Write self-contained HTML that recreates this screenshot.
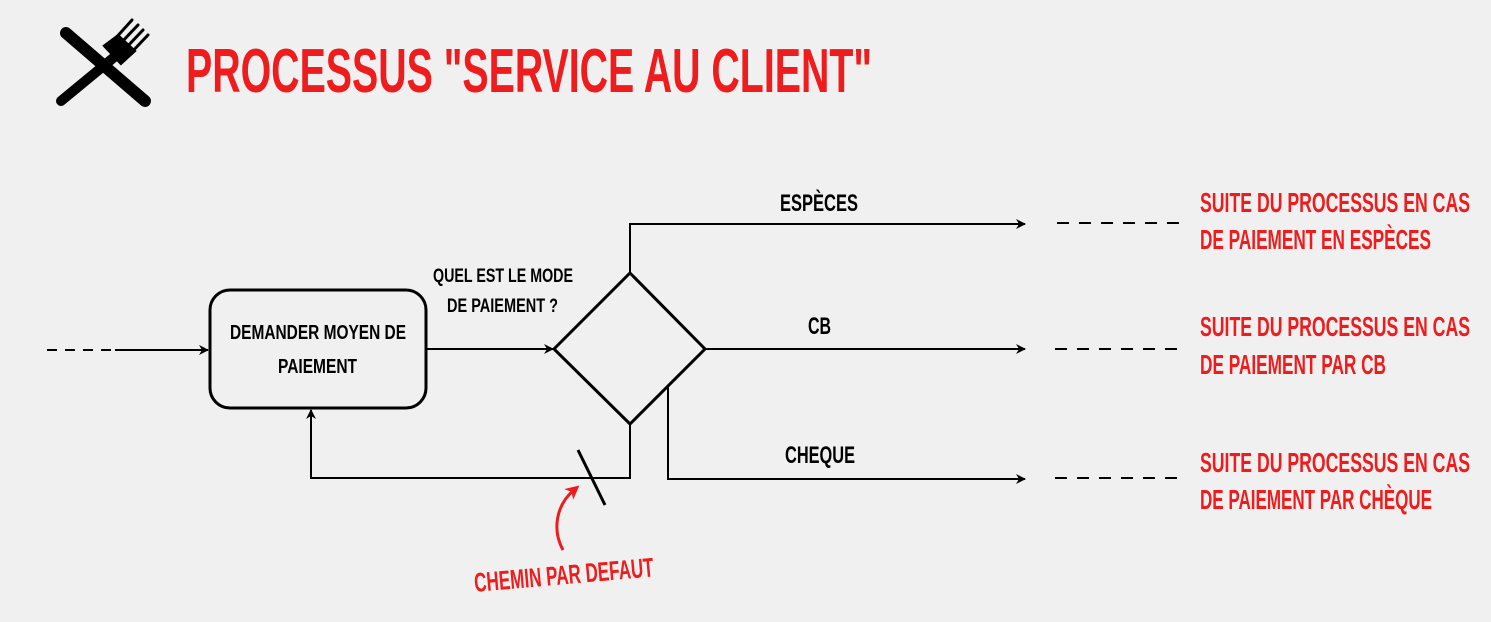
<!DOCTYPE html>
<html><head><meta charset="utf-8"><style>
html,body{margin:0;padding:0;background:#f0f0f0;}
svg{display:block}
text{font-family:"Liberation Sans",sans-serif;font-weight:bold;}
</style></head><body>
<svg width="1491" height="622" viewBox="0 0 1491 622" xmlns="http://www.w3.org/2000/svg">
<defs>
<marker id="a" markerWidth="10" markerHeight="10" refX="9" refY="5" orient="auto" markerUnits="userSpaceOnUse">
<path d="M0,0 L10,5 L0,10 L3,5 Z" fill="#000"/></marker>
<marker id="ar" markerWidth="14" markerHeight="14" refX="7" refY="7" orient="auto" markerUnits="userSpaceOnUse">
<path d="M0,0 L14,7 L0,14 L4,7 Z" fill="#ee1c1c"/></marker>
</defs>
<rect width="1491" height="622" fill="#f0f0f0"/>
<g stroke="#000" stroke-linecap="round" fill="none">
<line x1="66" y1="33" x2="145" y2="101" stroke-width="12"/>
<line x1="61" y1="101" x2="118" y2="54" stroke-width="10"/>
<path d="M106,46 L121,62 L133,51 L118,37 Z" fill="#000" stroke-width="5"/>
<line x1="114" y1="40" x2="132" y2="20" stroke-width="3"/>
<line x1="119" y1="45" x2="138" y2="25" stroke-width="3"/>
<line x1="124" y1="50" x2="143" y2="30" stroke-width="3"/>
<line x1="129" y1="55" x2="148" y2="35" stroke-width="3"/>
</g>
<text x="186" y="92" font-size="62" fill="#ee1c1c" textLength="686" lengthAdjust="spacingAndGlyphs">PROCESSUS "SERVICE AU CLIENT"</text>

<g stroke="#000" stroke-width="3" fill="none">
<line x1="47" y1="350" x2="115" y2="350" stroke-dasharray="10,8" stroke-width="2"/>
<line x1="115" y1="350" x2="208" y2="350" stroke-width="2" marker-end="url(#a)"/>
<rect x="210" y="290" width="216" height="118" rx="20"/>
<line x1="426" y1="349" x2="553" y2="349" stroke-width="2" marker-end="url(#a)"/>
<path d="M630,273 L705,349 L630,424 L554,349 Z"/>
<path d="M630,273 L630,224 L1025,224" stroke-width="2" marker-end="url(#a)"/>
<line x1="705" y1="349" x2="1025" y2="349" stroke-width="2" marker-end="url(#a)"/>
<path d="M668,387 L668,479 L1025,479" stroke-width="2" marker-end="url(#a)"/>
<path d="M630,424 L630,478 L311,478 L311,410" stroke-width="2" marker-end="url(#a)"/>
<line x1="578" y1="450" x2="605" y2="505" stroke-width="3"/>
<g stroke-width="2" stroke-dasharray="12,10">
<line x1="1057" y1="223" x2="1187" y2="223"/>
<line x1="1055" y1="349" x2="1187" y2="349"/>
<line x1="1055" y1="478" x2="1187" y2="478"/>
</g>
</g>
<path d="M563,550 C552,530 556,505 574,490" stroke="#ee1c1c" stroke-width="3" fill="none" marker-end="url(#ar)"/>

<g fill="#000">
<text x="230" y="339" font-size="20" textLength="176" lengthAdjust="spacingAndGlyphs">DEMANDER MOYEN DE</text>
<text x="278" y="373" font-size="20" textLength="79" lengthAdjust="spacingAndGlyphs">PAIEMENT</text>
<text x="433" y="282" font-size="19" textLength="140" lengthAdjust="spacingAndGlyphs">QUEL EST LE MODE</text>
<text x="447" y="312" font-size="19" textLength="111" lengthAdjust="spacingAndGlyphs">DE PAIEMENT ?</text>
<text x="780" y="211" font-size="24" textLength="78" lengthAdjust="spacingAndGlyphs">ESPÈCES</text>
<text x="808" y="334" font-size="24" textLength="23" lengthAdjust="spacingAndGlyphs">CB</text>
<text x="785" y="463" font-size="24" textLength="70" lengthAdjust="spacingAndGlyphs">CHEQUE</text>
</g>
<g fill="#ee1c1c" font-size="28">
<text x="1200" y="212" textLength="270" lengthAdjust="spacingAndGlyphs">SUITE DU PROCESSUS EN CAS</text>
<text x="1200" y="249" textLength="231" lengthAdjust="spacingAndGlyphs">DE PAIEMENT EN ESPÈCES</text>
<text x="1200" y="336" textLength="270" lengthAdjust="spacingAndGlyphs">SUITE DU PROCESSUS EN CAS</text>
<text x="1200" y="374" textLength="186" lengthAdjust="spacingAndGlyphs">DE PAIEMENT PAR CB</text>
<text x="1200" y="472" textLength="270" lengthAdjust="spacingAndGlyphs">SUITE DU PROCESSUS EN CAS</text>
<text x="1200" y="509" textLength="232" lengthAdjust="spacingAndGlyphs">DE PAIEMENT PAR CHÈQUE</text>
<text x="475" y="592" font-size="27" textLength="180" lengthAdjust="spacingAndGlyphs" transform="rotate(-5 475 592)">CHEMIN PAR DEFAUT</text>
</g>
</svg>
</body></html>
